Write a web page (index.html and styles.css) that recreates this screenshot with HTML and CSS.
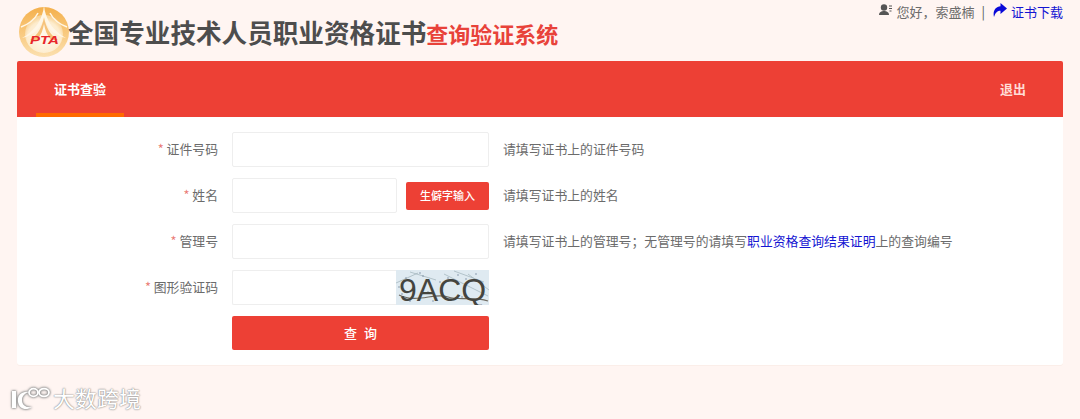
FILE: index.html
```html
<!DOCTYPE html>
<html lang="zh-CN">
<head>
<meta charset="utf-8">
<title>全国专业技术人员职业资格证书查询验证系统</title>
<link rel="stylesheet" href="styles.css">
</head>
<body>
<header class="header">
  <div class="brand">
    <svg class="logo" viewBox="0 0 52 52" width="52" height="52">
      <defs>
        <linearGradient id="disc" x1="0" y1="0" x2="0" y2="1">
          <stop offset="0" stop-color="#f4b04c"/>
          <stop offset="0.6" stop-color="#f9cd86"/>
          <stop offset="1" stop-color="#fbe0b0"/>
        </linearGradient>
        <radialGradient id="inner" cx="50%" cy="60%" r="55%">
          <stop offset="0" stop-color="#fffaf0"/>
          <stop offset="0.8" stop-color="#fdeccd"/>
          <stop offset="1" stop-color="#f9d69c"/>
        </radialGradient>
      </defs>
      <circle cx="26" cy="27" r="25" fill="url(#disc)"/>
      <circle cx="26" cy="29" r="19" fill="url(#inner)"/>
      <path d="M26 0 C25 14 17 26 4 33 C17 30 24 22 26 12 C28 22 35 30 48 33 C35 26 27 14 26 0Z" fill="#fff6e6"/>
      <path d="M26 13 C24 22 20 30 12 35 L40 35 C32 30 28 22 26 13Z" fill="#f6c27a"/>
      <path d="M26 19 C25 25 23 30 19 35 L33 35 C29 30 27 25 26 19Z" fill="#fff8ea"/>
      <path d="M20 8 C17 14 11 19 3 22 M32 8 C35 14 41 19 49 22" stroke="#fff6e6" stroke-width="1.500" fill="none"/>
      <text class="logo-text" x="12" y="38.500" textLength="29" lengthAdjust="spacingAndGlyphs">PTA</text>
    </svg>
    <h1 class="title">全国专业技术人员职业资格证书<span class="title-red">查询验证系统</span></h1>
  </div>
  <div class="userbar">
    <svg class="user-icon" viewBox="0 0 14 12" width="14" height="12">
      <circle cx="5" cy="3.500" r="3.200" fill="#555"/>
      <path d="M0 11 C0 8 2.500 7 5 7 C7.500 7 10 8 10 11Z" fill="#555"/>
      <path d="M10 2h3M10 4.500h3M10.500 7h2" stroke="#555" stroke-width="1"/>
    </svg>
    <span class="hello">您好，索盛楠</span>
    <span class="sep">|</span>
    <svg class="share-icon" viewBox="0 0 14 14" width="14" height="14">
      <path d="M7.500 0 L14 5.500 L7.500 11 V7.800 C4.500 7.800 2.500 9.500 1 14 C-0.500 8 2.500 3.500 7.500 3.200Z" fill="#0a0ad8"/>
    </svg>
    <a class="download" href="#">证书下载</a>
  </div>
</header>

<nav class="nav">
  <a class="tab" href="#">证书查验</a>
  <a class="logout" href="#">退出</a>
</nav>

<main class="panel">
  <div class="row">
    <label class="label"><i class="star">*</i> 证件号码</label>
    <input class="input" type="text">
    <span class="hint">请填写证书上的证件号码</span>
  </div>
  <div class="row">
    <label class="label"><i class="star">*</i> 姓名</label>
    <div class="field">
      <input class="input input-name" type="text">
      <button class="rare" type="button">生僻字输入</button>
    </div>
    <span class="hint">请填写证书上的姓名</span>
  </div>
  <div class="row">
    <label class="label"><i class="star">*</i> 管理号</label>
    <input class="input" type="text">
    <span class="hint">请填写证书上的管理号；无管理号的请填写<a class="link" href="#">职业资格查询结果证明</a>上的查询编号</span>
  </div>
  <div class="row">
    <label class="label"><i class="star">*</i> 图形验证码</label>
    <div class="field captcha-field">
      <input class="input input-captcha" type="text">
      <svg class="captcha" viewBox="0 0 93 35" width="93" height="35">
        <rect width="93" height="35" fill="#dfeaf1"/>
        <path d="M0 13 L22 3 M14 2 L40 10 M48 4 L92 26 M58 1 L88 12 M72 4 L93 20" stroke="#9fb1b9" stroke-width="0.700" fill="none"/>
        <path d="M3 25 C22 34 38 22 52 27 C64 31 76 26 92 31" stroke="#6f6a60" stroke-width="1.200" fill="none"/>
        <g fill="#6d7f96">
          <circle cx="6" cy="24" r="0.700"/><circle cx="10" cy="8" r="0.700"/><circle cx="27" cy="6" r="0.700"/>
          <circle cx="32" cy="22" r="0.700"/><circle cx="44" cy="12" r="0.700"/><circle cx="62" cy="5" r="0.700"/>
          <circle cx="66" cy="27" r="0.700"/><circle cx="80" cy="4" r="0.700"/><circle cx="85" cy="14" r="0.700"/>
          <circle cx="14" cy="31" r="0.700"/><circle cx="37" cy="31" r="0.700"/><circle cx="52" cy="8" r="0.700"/>
          <circle cx="24" cy="3" r="0.700"/><circle cx="70" cy="9" r="0.700"/><circle cx="3" cy="17" r="0.700"/>
        </g>
        <text class="captcha-text" x="3" y="31">9ACQ</text>
      </svg>
    </div>
  </div>
  <div class="row">
    <span class="label"></span>
    <button class="submit" type="button">查 询</button>
  </div>
</main>

<footer class="mark">
  <svg class="mark-icon" viewBox="0 0 44 30" width="44" height="30">
    <path d="M4 8 H8 V25 H4Z" fill="#fff"/>
    <path d="M21 9 C13 8 9 13 10 19 C11 26 18 28 24 24 C18 25 14 22 14 17 C14 13 17 10 21 9Z" fill="#fff"/>
    <g fill="none" stroke="#fff" stroke-width="1.800">
      <ellipse cx="25.500" cy="9.500" rx="4.500" ry="3.800"/>
      <ellipse cx="36" cy="9.500" rx="5" ry="3.800"/>
    </g>
  </svg>
  <span class="mark-text">大数跨境</span>
</footer>
</body>
</html>
```
FILE: styles.css
```css
* {
  box-sizing: border-box;
}

html,
body {
  margin: 0;
  padding: 0;
}

body {
  height: 419px;
  overflow: hidden;
  background: #fff5f2;
  color: #6b6b6b;
  font-family: "Noto Sans CJK SC", "Liberation Sans", sans-serif;
  font-size: 12.85px;
}

.header {
  display: flex;
  justify-content: space-between;
  height: 61px;
  padding: 0 17px 0 18px;
}

.brand {
  display: flex;
  align-items: flex-start;
  height: 61px;
  padding-top: 5px;
}

.logo {
  display: block;
  flex: none;
}

.logo-text {
  fill: #e8262a;
  font-family: "Liberation Sans", sans-serif;
  font-size: 10px;
  font-style: italic;
  font-weight: 700;
}

.title {
  margin: 8px 0 0 -2px;
  color: #4d4d4d;
  font-size: 25.6px;
  font-weight: 700;
  line-height: 38px;
  white-space: nowrap;
}

.title-red {
  color: #e8423a;
  font-size: 22px;
}

.userbar {
  display: flex;
  align-items: center;
  height: 23px;
  font-size: 13px;
  white-space: nowrap;
}

.user-icon {
  margin-right: 3px;
  margin-top: -3px;
}

.sep {
  margin: 0 8px 0 7px;
  color: #555;
}

.share-icon {
  margin-right: 4px;
  margin-top: -3px;
}

.download,
.link {
  color: #1414d2;
  text-decoration: none;
}

.nav {
  display: flex;
  justify-content: space-between;
  height: 56px;
  margin: 0 17px;
  padding: 0 37px 0 19px;
  border-radius: 2px 2px 0 0;
  background: #ed4035;
}

.tab {
  width: 88px;
  border-bottom: 4px solid #ff6a00;
  color: #fff;
  font-size: 13px;
  font-weight: 700;
  line-height: 56px;
  text-align: center;
  text-decoration: none;
}

.logout {
  color: #ffdcd5;
  font-size: 13px;
  font-weight: 700;
  line-height: 56px;
  text-decoration: none;
}

.panel {
  display: flex;
  flex-direction: column;
  gap: 11px;
  height: 248px;
  margin: 0 17px;
  padding-top: 15px;
  border-radius: 0 0 3px 3px;
  background: #fff;
  box-shadow: 0 1px 0 #fbeee9;
}

.row {
  display: flex;
  align-items: center;
  height: 35px;
}

.label {
  flex: none;
  width: 201px;
  margin-right: 14px;
  padding-bottom: 2px;
  text-align: right;
}

.star {
  color: #ea7a74;
  font-style: normal;
}

.input {
  display: block;
  flex: none;
  width: 257px;
  height: 35px;
  margin: 0;
  padding: 0 8px;
  border: 1px solid #eee;
  border-radius: 2px;
  background: #fff;
  outline: none;
}

.field {
  display: flex;
  flex: none;
  align-items: center;
  justify-content: space-between;
  width: 257px;
  height: 35px;
}

.input-name {
  width: 165px;
}

.input-captcha {
  width: 164px;
  border-right: 0;
  border-radius: 2px 0 0 2px;
}

.captcha {
  display: block;
  flex: none;
}

.captcha-text {
  fill: #45453f;
  font-family: "Liberation Sans", sans-serif;
  font-size: 32px;
}

.rare {
  width: 83px;
  height: 28px;
  padding: 0 0 2px;
  border: 0;
  border-radius: 2px;
  background: #ed4035;
  color: #fff;
  font: 500 11px "Noto Sans CJK SC", sans-serif;
}

.hint {
  margin-left: 14px;
  padding-bottom: 2px;
  white-space: nowrap;
}

.submit {
  align-self: flex-start;
  width: 257px;
  height: 34px;
  padding: 0 0 2px;
  border: 0;
  border-radius: 2px;
  background: #ed4035;
  color: #fff;
  font: 500 13px "Noto Sans CJK SC", sans-serif;
  word-spacing: 4px;
}

.mark {
  display: flex;
  align-items: center;
  height: 30px;
  margin-top: 18px;
  padding-left: 8px;
}

.mark-icon {
  flex: none;
  filter: drop-shadow(0 0 1px #777) drop-shadow(0 0 1px #aaa);
}

.mark-text {
  margin-left: 1px;
  padding-bottom: 2px;
  color: #fff;
  font-size: 22px;
  line-height: 30px;
  text-shadow: 0 0 2px #888, 0 0 1px #888;
}
```
